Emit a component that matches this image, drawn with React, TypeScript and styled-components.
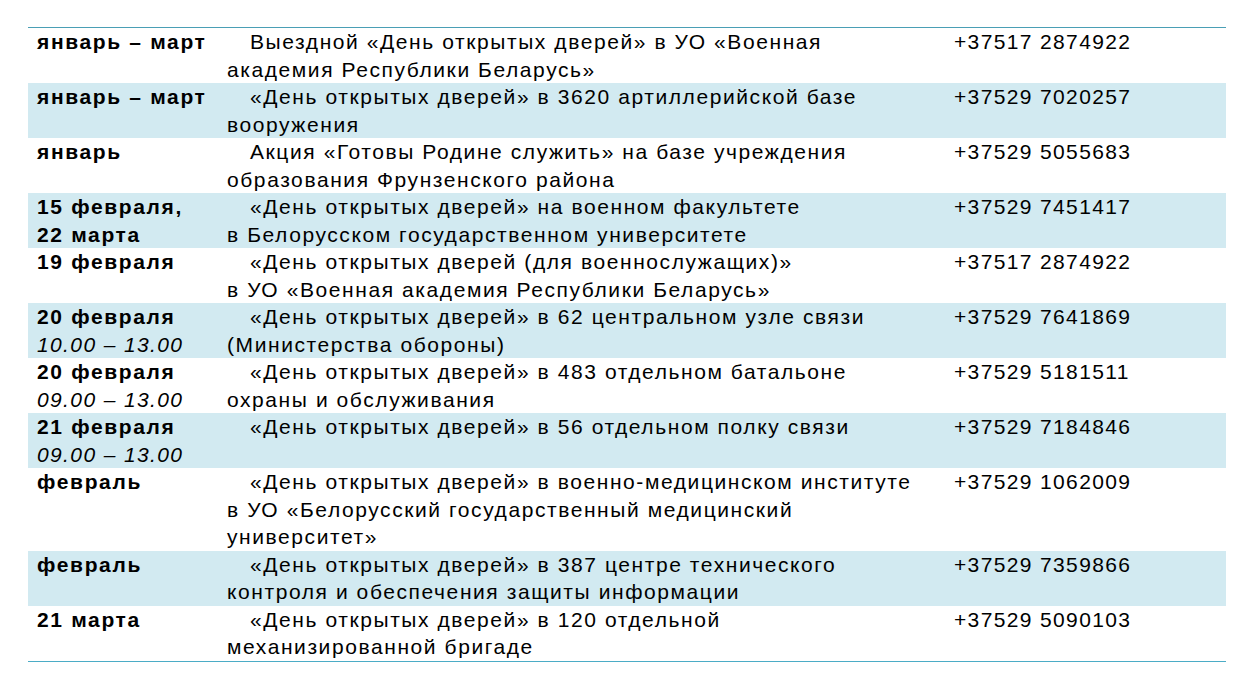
import React from "react";
import styled, { createGlobalStyle } from "styled-components";

const GlobalStyle = createGlobalStyle`
  html, body {
    margin: 0;
    padding: 0;
    background: #ffffff;
  }
  body {
    font-family: "Liberation Sans", Arial, sans-serif;
    color: #000000;
  }
`;

const Page = styled.div`
  padding: 27px 31px 0 28px;
`;

const Table = styled.div`
  width: 1198px;
  border-top: 1px solid #4a9fb5;
  border-bottom: 1px solid #4bacc6;
`;

const Row = styled.div<{ $shaded?: boolean }>`
  display: grid;
  grid-template-columns: 199px 727px 1fr;
  min-height: 55px;
  background: ${(p) => (p.$shaded ? "#d2eaf1" : "#ffffff")};
  font-size: 21px;
  line-height: 27.5px;
`;

const DateCell = styled.div`
  padding-left: 9px;
  white-space: nowrap;
`;

const DateLine = styled.div`
  font-weight: 700;
  letter-spacing: 1.65px;
`;

const TimeLine = styled.div`
  font-style: italic;
  letter-spacing: 1.38px;
`;

const EventCell = styled.div`
  white-space: nowrap;
  letter-spacing: 1.58px;
`;

const EventLine = styled.div<{ $first?: boolean }>`
  padding-left: ${(p) => (p.$first ? "23px" : "0")};
`;

const PhoneCell = styled.div`
  white-space: nowrap;
  letter-spacing: 1.36px;
`;

type Item = {
  dates: string[];
  time?: string;
  lines: string[];
  phone: string;
};

const items: Item[] = [
  {
    dates: ["январь – март"],
    lines: ["Выездной «День открытых дверей» в УО «Военная", "академия Республики Беларусь»"],
    phone: "+37517 2874922",
  },
  {
    dates: ["январь – март"],
    lines: ["«День открытых дверей» в 3620 артиллерийской базе", "вооружения"],
    phone: "+37529 7020257",
  },
  {
    dates: ["январь"],
    lines: ["Акция «Готовы Родине служить» на базе учреждения", "образования Фрунзенского района"],
    phone: "+37529 5055683",
  },
  {
    dates: ["15 февраля,", "22 марта"],
    lines: ["«День открытых дверей» на военном факультете", "в Белорусском государственном университете"],
    phone: "+37529 7451417",
  },
  {
    dates: ["19 февраля"],
    lines: ["«День открытых дверей (для военнослужащих)»", "в УО «Военная академия Республики Беларусь»"],
    phone: "+37517 2874922",
  },
  {
    dates: ["20 февраля"],
    time: "10.00 – 13.00",
    lines: ["«День открытых дверей» в 62 центральном узле связи", "(Министерства обороны)"],
    phone: "+37529 7641869",
  },
  {
    dates: ["20 февраля"],
    time: "09.00 – 13.00",
    lines: ["«День открытых дверей» в 483 отдельном батальоне", "охраны и обслуживания"],
    phone: "+37529 5181511",
  },
  {
    dates: ["21 февраля"],
    time: "09.00 – 13.00",
    lines: ["«День открытых дверей» в 56 отдельном полку связи"],
    phone: "+37529 7184846",
  },
  {
    dates: ["февраль"],
    lines: [
      "«День открытых дверей» в военно-медицинском институте",
      "в УО «Белорусский государственный медицинский",
      "университет»",
    ],
    phone: "+37529 1062009",
  },
  {
    dates: ["февраль"],
    lines: ["«День открытых дверей» в 387 центре технического", "контроля и обеспечения защиты информации"],
    phone: "+37529 7359866",
  },
  {
    dates: ["21 марта"],
    lines: ["«День открытых дверей» в 120 отдельной", "механизированной бригаде"],
    phone: "+37529 5090103",
  },
];

export default function App() {
  return (
    <>
      <GlobalStyle />
      <Page>
        <Table>
          {items.map((item, i) => (
            <Row key={i} $shaded={i % 2 === 1}>
              <DateCell>
                {item.dates.map((d) => (
                  <DateLine key={d}>{d}</DateLine>
                ))}
                {item.time && <TimeLine>{item.time}</TimeLine>}
              </DateCell>
              <EventCell>
                {item.lines.map((l, j) => (
                  <EventLine key={j} $first={j === 0}>
                    {l}
                  </EventLine>
                ))}
              </EventCell>
              <PhoneCell>{item.phone}</PhoneCell>
            </Row>
          ))}
        </Table>
      </Page>
    </>
  );
}
